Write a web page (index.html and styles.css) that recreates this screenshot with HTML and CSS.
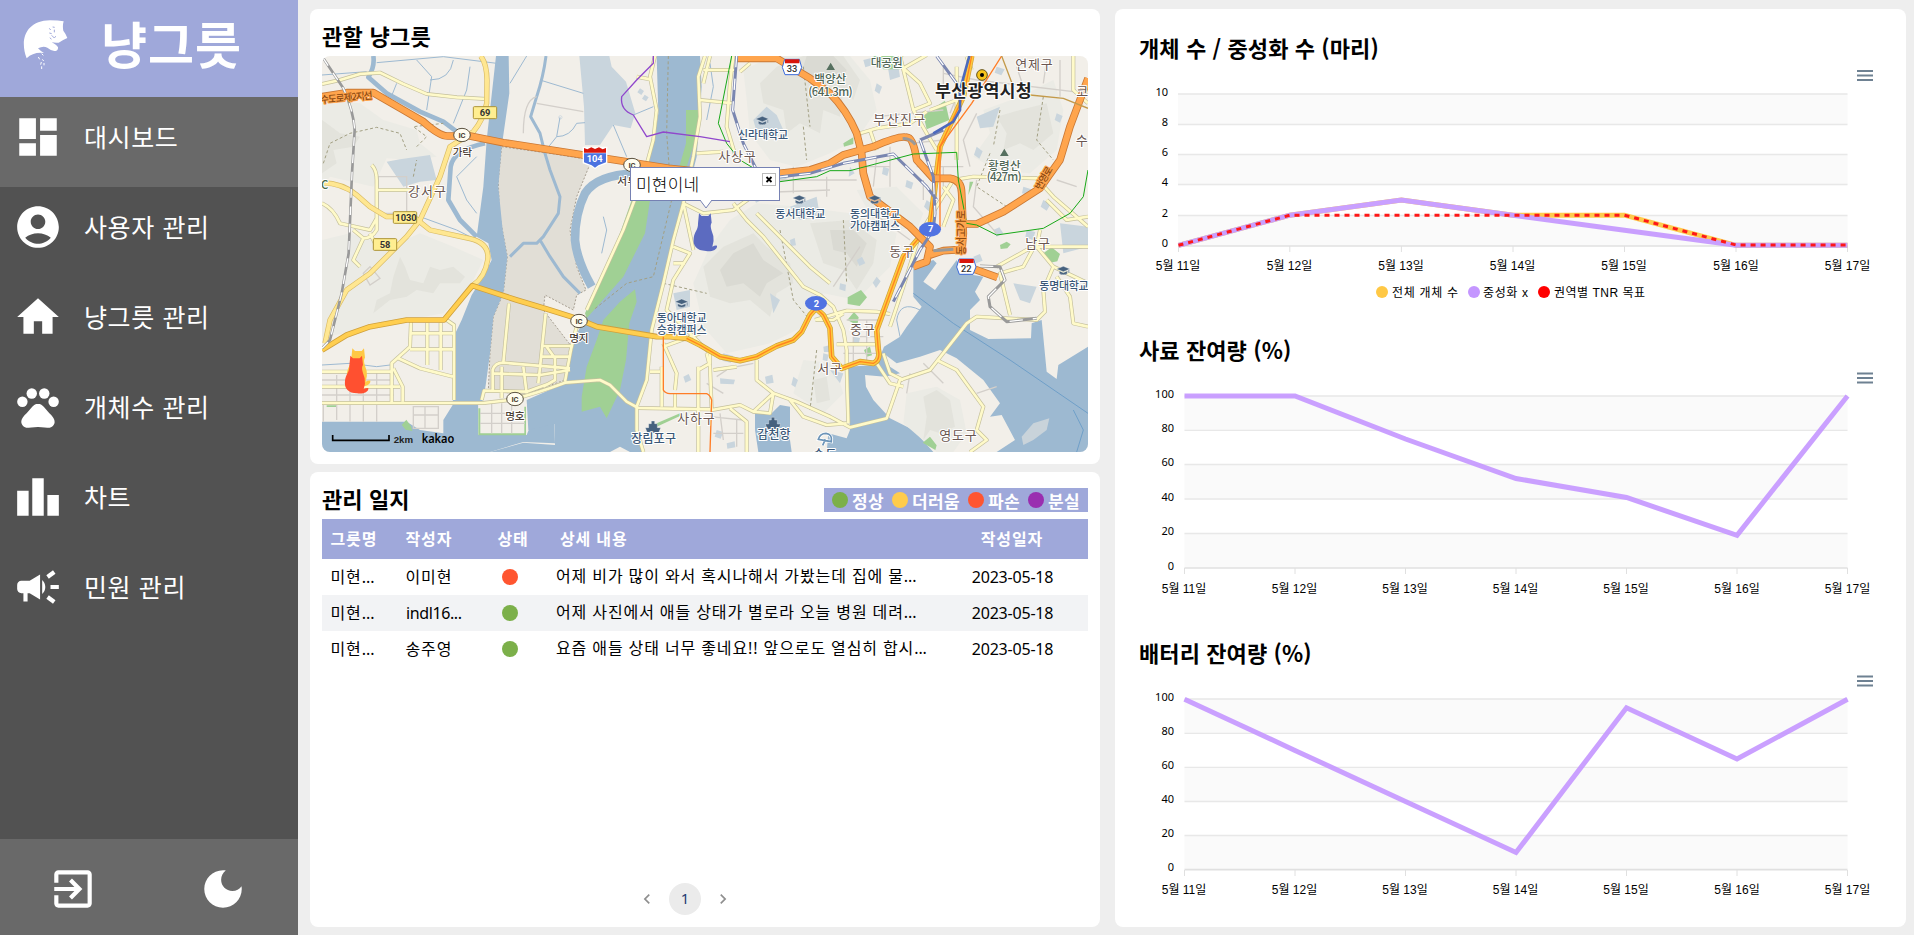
FILE: index.html
```html
<!DOCTYPE html>
<html lang="ko">
<head>
<meta charset="utf-8">
<title>냥그릇</title>
<link rel="stylesheet" href="styles.css">
</head>
<body>
<div class="app">
  <aside class="sidebar">
    <header class="brand">
      <svg class="brand-logo" viewBox="60 50 150 165">
        <path fill="#fff" d="M80 174C58 118 78 61 150 60Q175 60 191 63Q187 76 190 91Q196 98 202 113Q186 120 176 127Q164 128 155 126Q170 133 174 141Q175 152 163 152Q150 149 142 142Q130 135 114 144Q122 153 132 158Q100 154 80 174ZM106 136Q110 131 115 131L107 144Z"/>
        <path fill="none" stroke="#9fa8da" stroke-width="3" d="M148 84l4 5M158 80l6 1M163 88v8M148 98l7 2M155 105l8 8M150 112l4 5M163 112l5-4"/>
        <path fill="none" stroke="#fff" stroke-width="3" d="M125 160l5 5M115 170l4 7M127 177l4 5M132 188v7M124 185l-2 8M125 198v8"/>
      </svg>
      <span class="brand-name">냥그릇</span>
    </header>
    <nav class="menu">
      <a class="item active"><svg viewBox="0 0 24 24"><path d="M3 13h8V3H3v10zm0 8h8v-6H3v6zm10 0h8V11h-8v10zm0-18v6h8V3h-8z"/></svg><span>대시보드</span></a>
      <a class="item"><svg viewBox="0 0 24 24"><path d="M12 2C6.48 2 2 6.48 2 12s4.48 10 10 10 10-4.48 10-10S17.52 2 12 2zm0 4c1.93 0 3.5 1.57 3.5 3.5S13.93 13 12 13s-3.5-1.57-3.5-3.5S10.07 6 12 6zm0 14c-2.03 0-4.43-.82-6.14-2.88C7.55 15.8 9.68 15 12 15s4.45.8 6.14 2.12C16.43 19.18 14.03 20 12 20z"/></svg><span>사용자 관리</span></a>
      <a class="item"><svg viewBox="0 0 24 24"><path d="M10 20v-6h4v6h5v-8h3L12 3 2 12h3v8z"/></svg><span>냥그릇 관리</span></a>
      <a class="item"><svg viewBox="0 0 24 24"><circle cx="4.5" cy="9.5" r="2.5"/><circle cx="9" cy="5.5" r="2.5"/><circle cx="15" cy="5.5" r="2.5"/><circle cx="19.5" cy="9.5" r="2.5"/><path d="M17.34 14.86c-.87-1.02-1.6-1.89-2.48-2.91-.46-.54-1.05-1.08-1.75-1.32-.11-.04-.22-.07-.33-.09-.25-.04-.52-.04-.78-.04s-.53 0-.79.05c-.11.02-.22.05-.33.09-.7.24-1.28.78-1.75 1.32-.87 1.02-1.6 1.89-2.48 2.91-1.31 1.31-2.92 2.76-2.62 4.79.29 1.02 1.02 2.03 2.33 2.32.73.15 3.06-.44 5.54-.44h.18c2.48 0 4.81.58 5.54.44 1.31-.29 2.04-1.31 2.33-2.31.31-2.04-1.3-3.49-2.61-4.8z"/></svg><span>개체수 관리</span></a>
      <a class="item"><svg viewBox="0 0 24 24"><path d="M7.5 21H2V9h5.5v12zm7.25-18h-5.5v18h5.5V3zM22 11h-5.5v10H22V11z"/></svg><span>차트</span></a>
      <a class="item"><svg viewBox="0 0 24 24"><path d="M18 11v2h4v-2h-4zm-2 6.61c.96.71 2.21 1.65 3.2 2.39.4-.53.8-1.07 1.2-1.6-.99-.74-2.24-1.68-3.2-2.4-.4.54-.8 1.08-1.2 1.61zM20.4 5.6c-.4-.53-.8-1.07-1.2-1.6-.99.74-2.24 1.68-3.2 2.4.4.53.8 1.07 1.2 1.6.96-.72 2.21-1.65 3.2-2.4zM4 9c-1.1 0-2 .9-2 2v2c0 1.1.9 2 2 2h1v4h2v-4h1l5 3V6L8 9H4zm11.5 3c0-1.33-.58-2.53-1.5-3.35v6.69c.92-.81 1.5-2.01 1.5-3.34z"/></svg><span>민원 관리</span></a>
    </nav>
    <footer class="side-actions">
      <svg viewBox="0 0 24 24"><path d="M10.09 15.59L11.5 17l5-5-5-5-1.41 1.41L12.67 11H3v2h9.67l-2.58 2.59zM19 3H5c-1.11 0-2 .9-2 2v4h2V5h14v14H5v-4H3v4c0 1.1.89 2 2 2h14c1.1 0 2-.9 2-2V5c0-1.1-.9-2-2-2z"/></svg>
      <svg viewBox="0 0 24 24"><path d="M12 3c-4.97 0-9 4.03-9 9s4.03 9 9 9 9-4.03 9-9c0-.46-.04-.92-.1-1.36-.98 1.37-2.58 2.26-4.4 2.26-2.98 0-5.4-2.42-5.4-5.4 0-1.81.89-3.42 2.26-4.4-.44-.06-.9-.1-1.36-.1z"/></svg>
    </footer>
  </aside>

  <main class="content">
    <div class="left">
      <section class="card map-card">
        <h2 class="title">관할 냥그릇</h2>
        <div class="map">
          <svg class="map-svg" viewBox="36 168 2298 1188">
            <defs>
              <g id="minor">
                <path d="M36 252L90 240L150 222L210 218L280 252L350 282L440 292L530 297"/>
                <path d="M185 495Q200 510 200 540V690Q185 715 160 715L130 690M200 570H320M36 610Q70 625 90 670L180 690L200 655M160 715L130 780L150 800M180 700L200 740"/>
                <path d="M36 1115H245M36 1160H270M245 1208V1090L300 1040L303 965M300 1000H430M300 1048H432M352 968V1095M392 968V1110M265 1075L330 1105L428 1130M432 1200V975L410 960M250 1105L278 1160V1205"/>
                <path d="M36 1209H520L600 1200Q680 1180 765 1148L870 1140L900 1155L950 1205L985 1224L1200 1228"/>
                <path d="M515 1200L522 1172L650 1175L720 1150M548 1175V1110Q555 1088 580 1088L780 1105M580 1088L597 910M685 1150L707 940M545 1120L690 1125L780 1110M640 1100L650 1180M575 1100V1195M700 1038H785L765 1145M695 1070H780M710 1040L735 1075V1140L700 1160M800 980L780 1060"/>
                <path d="M1035 168L1020 230L1040 330L1030 420L1000 530L940 690L830 930M980 230L1020 238"/>
                <path d="M1185 168L1165 230L1170 350L1150 470L1120 610L1090 720L1060 850L1025 990L1010 1140L980 1220V1290L1000 1356M1180 210H1280M1170 300L1270 310M1160 460L1240 455M1120 610L1180 640L1270 630L1340 580M1090 740L1140 760L1090 840L1070 930L1150 1010L1200 1060M1090 790L1125 790M1120 610L1150 750M1165 1100V1356M1020 1115H1050M1055 1100V1220M1095 1180V1225M1165 1110L1200 1090V1050M1060 1040L1170 1000M1060 1030L1100 1120L1095 1170"/>
                <path d="M1200 168L1180 250M1270 168L1260 250L1250 380L1280 480M1290 215L1320 190"/>
                <path d="M1270 610L1310 660L1360 710L1480 860L1530 885L1570 920L1600 990L1610 1050V1100L1615 1270M1515 960Q1580 940 1610 932L1700 935L1740 942M1580 1033H1700M1520 960H1570L1600 940"/>
                <path d="M1190 1060L1200 1100L1205 1230L1290 1215L1330 1235L1390 1180L1460 1205L1560 1250L1620 1282L1730 1255L1770 1140L1860 1110L1970 970L2000 950L2180 960L2205 935L2200 870L2230 800L2334 850M1340 1080V1140L1390 1180L1380 1240L1330 1235M1260 1225L1310 1265V1356M1440 1200L1480 1250L1550 1275L1610 1270M1210 1110L1280 1100"/>
                <path d="M1700 1090L1740 1150L1780 1160M1720 1060L1740 1120L1780 1140M1880 1080L1940 1110L2020 1220L2000 1290L2030 1320L1980 1356"/>
                <path d="M1740 980L1780 860L1830 700L1880 620L1930 540L1990 530L2180 535L2230 590L2334 680M1970 170L1985 210M1770 168Q1790 250 1810 330L1850 400L1880 450M1780 205L1850 165M1780 205L1830 250L1860 310L1810 330M1860 330L1940 300M1940 200V480M1650 400L1700 385L1800 370L1850 335M1680 390L1700 450M1650 400L1640 430M2290 168V270L2334 310M2060 800L2150 750L2190 740H2334M2100 945L2070 820L2140 800L2170 745M2190 690L2180 740L2230 800M1900 560L1930 600L1900 680"/>
                <path d="M2210 600L2270 660L2334 650M2240 830L2280 890L2290 970L2334 980M1560 850L1500 800L1340 640"/>
              </g>
              <g id="yellow">
                <path d="M512 168Q530 190 531 240L530 310Q520 360 490 395L420 440L390 530L330 660L290 710L240 760L180 820L110 870L60 960L45 1030"/>
                <path d="M36 548Q100 550 140 585L180 620L230 650H310L360 690L480 716Q540 730 533 780Q525 830 490 855"/>
              </g>
              <g id="amber"><path d="M36 1050L110 1005L180 980L290 960H402L487 857L620 900L720 930L800 955L860 980L1040 1010H1080L1130 1015"/></g>
              <g id="city">
                <path d="M1130 1015L1170 1035L1230 1070L1290 1082L1340 1070L1400 1038L1450 1020L1475 995L1500 945L1518 925L1540 945L1560 985L1565 1070L1595 1105L1650 1085L1690 1090Q1712 1080 1705 1050L1700 990L1740 880L1780 770L1830 710"/>
                <path d="M1985 168L1960 290L1890 440L1875 560L1860 680"/>
              </g>
              <g id="orange">
                <path d="M36 290L110 278L190 278L280 330L340 365Q390 410 415 408H480L580 428L820 465L960 487L1075 505L1200 518L1410 520L1500 510L1560 490L1600 465L1690 440Q1770 405 1790 412Q1810 410 1820 480L1870 535H1920Q1955 540 1955 580L1960 700L1955 760"/>
                <path d="M1280 175H1400L1500 235L1560 280Q1610 330 1640 400L1655 460L1660 520L1680 590L1720 620L1800 680L1860 740L1850 785L1810 800"/>
                <path d="M1960 672H2000L2080 635L2190 565L2250 480L2280 380L2310 300L2334 235M1995 808L2062 832M1860 765L1900 752L1960 748"/>
              </g>
              <path id="cat" d="M17 0L25 8H45L52 0L55 28C48 38 56 52 60 68Q63 85 57 100Q64 96 71 97C73 110 52 116 38 113C10 112-2 98 1 75C3 55 15 50 14 30Z"/>
              <g id="school"><path d="M0 12L20 4L40 12L20 20Z"/><path d="M8 18V26Q20 33 32 26V18L20 23ZM35 14h3v10h-3z"/></g>
            </defs>

            <rect x="36" y="168" width="2298" height="1188" fill="#f2efe9"/>

            <g class="hill">
              <path d="M36 300L150 310L220 360L320 390L330 430L380 470L300 480L230 475L190 560L60 530L36 560Z"/>
              <path d="M36 720L120 700L240 740L330 700L430 740L520 780L480 860L400 940L290 960L180 970L110 1000L36 1010Z"/>
              <path d="M1300 210L1390 168L1620 168L1680 240L1700 330L1640 420L1560 460L1460 500L1380 480L1320 400L1310 300Z"/>
              <path d="M1260 660L1340 610L1470 620L1620 640L1760 700L1740 800L1640 900L1540 880L1480 980L1380 1030L1250 1060L1180 980L1150 850L1200 740Z"/>
              <path d="M2020 330L2130 290L2230 240L2260 330L2240 450L2160 520L2060 510L1990 470L2040 400Z"/>
              <path d="M1480 1080L1570 1090L1600 1180L1540 1240L1450 1180Z"/>
              <path d="M1640 570L1760 560L1840 640L1820 690L1700 680Z"/>
            </g>
            <g class="hill-dark">
              <path d="M50 370L90 400L150 410L130 440L70 450L80 490L36 520V360Z"/>
              <path d="M270 770L285 800L300 840L340 850L360 800L390 810L430 800L465 830L450 850L390 850L370 880L320 870L290 890L240 900L190 940L200 900L240 880L250 830Z"/>
              <path d="M1350 250L1400 200L1480 168H1600L1650 240L1630 300L1600 270L1590 350L1540 330L1530 400L1470 370L1430 400L1420 330L1360 310Z"/>
              <path d="M1240 740L1330 700L1370 740L1440 790L1450 850L1400 880L1380 950L1320 900L1260 910L1200 890L1180 800Z"/>
              <path d="M1500 670L1620 660L1700 720L1690 790L1640 870L1600 810L1540 790Z"/>
              <path d="M2060 350L2130 330L2210 310L2230 400L2170 450L2130 430L2080 450L2090 400Z"/>
              <path d="M1510 1140L1550 1130L1560 1200L1520 1210Z"/>
            </g>
            <g class="hill-core">
              <path d="M1490 168H1570L1610 210L1590 250L1560 230L1530 290L1500 250L1470 230Z"/>
              <path d="M1270 760L1330 730L1360 780L1420 820L1370 850L1350 890L1300 850L1250 860L1230 810Z"/>
              <path d="M1560 690L1630 690L1670 730L1640 800L1610 760L1570 750Z"/>
            </g>
            <g class="town">
              <path d="M230 485L270 478L360 465L380 540L330 545L280 560L260 530Z"/>
              <path d="M808 168H898L905 200L948 245L976 340L962 385L910 375L870 435H825L822 320Z"/>
              <path d="M1330 360L1370 320L1400 345L1420 390L1370 415L1340 395Z"/>
              <path d="M2000 350L2070 320L2050 380L2010 385ZM2110 850L2180 860L2160 910L2130 900ZM1440 620L1520 590L1530 650L1470 660ZM1090 880L1140 870L1140 920L1100 930ZM2250 670L2334 680V740L2260 760ZM1730 180L1760 168L1770 230L1740 240ZM1400 500L1440 530L1410 545ZM1560 1110L1600 1120L1590 1150ZM1380 880L1410 900L1390 940Z"/>
              <path d="M990 265l12 8-8 12-12-8zM1004 284l12 8-8 12-12-8z"/>
              <path d="M1230 1135l45 4-4 14-40-2zM1240 1060l30 8-8 20-25-6zM1365 1130l22-6 4 24-22 4zM1450 1130l14 10-8 22-12-8zM1540 1040l18-4v20h-16zM1630 1010l20 4-4 18-18-4zM1640 780l16-10 10 20-18 8zM1700 830l12 14-14 20-10-16zM1620 500l14 20-18 10zM1720 500l18 6-6 22-16-6zM1850 600l16 12-10 22-14-14zM1790 540l20 8-6 20-18-8zM2000 440l18 14-10 22-16-12zM2140 560l24 8-6 18-22-6zM2200 600l22 12-12 20-18-12zM2260 420l16 12-10 24-14-12zM2050 690l18-8 12 18-20 10zM1990 770l20-8 8 20-20 8zM2150 690l26 6-8 24-22-8zM1700 250l16 10-8 22-14-10zM1660 180l24-6 6 20-24 8zM1220 1290l20 6-8 20-18-6zM1250 1330l24-6 2 18-24 4zM1120 1130l16-8 8 18-18 8zM620 1250h26v24h-26zM540 1240h16v14h-16zM1540 1060l16 4-4 20-14-4zM1440 720l14-6 4 22-16 2zM1330 590l16-6 10 16-18 8zM1590 850l18 4-2 20-18-6zM2060 200l24 8-10 18-20-8zM2240 340l18 8-8 20-16-8z"/>
            </g>
            <path class="tan" d="M575 440L720 460L845 480L800 590L780 690L800 800L828 870L800 885L790 930L705 885L700 930L785 1040L765 1140L640 1185L535 1170L540 1060L550 950L580 880L592 770L568 640L565 540Z"/>

            <g class="water">
              <path d="M558 168H596L598 280L575 440L565 560L578 690L592 770L580 880L550 950L540 1060L528 1150L520 1200L505 1215V1305H650L660 1280L732 1270L735 1330L640 1326L540 1356H36V1265H290L330 1290L400 1300V1260L428 1215L436 1000L455 960L485 885L520 830L545 780L535 730L500 710L520 560L530 420Z"/>
              <path d="M1040 168L1045 340L1030 430L1000 550L945 690L880 830L825 960L800 1000L785 1060L765 1150L650 1200L655 1290L733 1272L735 1335L640 1328L540 1356H1000L980 1290L982 1220L1010 1140L1020 1000L1060 850L1090 720L1125 610L1160 470L1175 260L1170 168Z"/>
              <path d="M1810 800L1870 780L1880 790L1840 845L1875 870L1940 780L1960 820L2020 830L1995 875L2010 900L1980 930V990L2035 1017L2163 1015L2165 970L2195 960L2210 1115L2240 1137L2245 1095L2334 1040V1356H1550L1555 1300L1610 1315L1620 1290L1612 1100L1700 1095L1722 1040L1770 1010L1790 980L1835 920L1810 890Z"/>
              <path d="M1335 1235L1385 1240L1410 1215L1440 1220V1320L1445 1356H1345L1335 1290Z"/>
            </g>
            <path fill="#f2efe9" d="M505 1215L650 1212V1303H505Z"/>
            <path fill="#f2efe9" d="M1665 1125L1725 1130L1770 1120L1740 1100L1720 1060L1760 1090L1830 1070L1890 1050L1940 1075L2020 1140L2070 1210L2040 1250L2075 1245L2115 1320L2060 1356H1870L1810 1290L1740 1255L1690 1200L1668 1160Z"/>
            <path fill="#f2efe9" d="M900 1356L930 1340L960 1356Z"/>
            <path fill="#c9d3da" d="M2135 1310L2170 1270L2218 1255L2210 1290L2170 1320L2140 1335Z"/>
            <g class="hill">
              <path d="M1790 1180L1880 1160L1950 1200L1970 1300L1930 1356H1880L1780 1270Z"/>
            </g>
            <path class="hill-dark" d="M1840 1190L1880 1170L1920 1200L1935 1280L1890 1300L1860 1290L1840 1320L1850 1250Z"/>
            <g class="stream">
              <path stroke-width="14" d="M190 168Q195 200 175 232L230 280L330 335L400 365L440 395M525 430Q430 450 422 500L415 600L450 660L500 710"/>
              <path stroke-width="9" d="M708 168Q700 230 680 290L662 350L690 400L705 460L720 510L750 590L745 640L700 710L680 730L640 730L600 770M690 720L720 770L760 830L810 880"/>
              <path stroke-width="26" d="M975 520Q860 525 825 580Q795 640 795 720Q800 780 845 860"/>
              <path stroke-width="3" d="M36 225L170 215M200 188L400 170L560 190M320 180L365 230L350 330M430 180Q420 240 360 240M480 200L470 270L430 370M260 250L240 300M690 240L820 280M750 352L740 410L700 460M740 410Q780 410 800 370L825 368M600 250L650 168M910 375L950 470M970 345L1030 320M880 650L890 690L875 760M500 470L440 530L470 600L500 640M36 1095L120 1090L200 1100L240 1095M330 650L440 690L480 710M1200 190L1210 260L1190 360M1830 930Q1770 900 1760 960L1770 1010"/>
              <circle cx="751" cy="352" r="5"/>
            </g>
            <path fill="none" stroke="#6f9fc8" stroke-width="3" d="M1810 880L1930 970L2100 1080L2334 1240M2290 1230L2320 1290L2300 1356"/>
            <g class="green">
              <path d="M1128 330H1168L1162 400L1130 500H1108L1128 430Z"/>
              <path d="M965 600H1020L1005 700L940 830L830 955L825 940L885 810L930 700Z"/>
              <path d="M975 868L980 905L958 970L948 1080L930 1170L890 1255L870 1220L815 1235L815 1190L830 1100L860 1020L880 960L930 905Z"/>
              <path d="M1840 345L1905 302L1918 360L1850 388ZM1613 892l40-22 18 22-22 26-36-6zM1612 960l20-24 14 16-4 24zM1662 1050l18-10 6 26-16 4zM1990 545l-15 40 4-40zM1600 430l30-18v20l-28 8zM2200 760l25-18 25 20-8 22-25 5zM2070 735l20-10 12 8-10 12-20 2zM275 1275l14-16 14 20 4 14-20-4zM505 1225h6v75h132v-80h5v86h-143zM1838 1328l22-18 20 26-4 14zM1690 168h90l-10 40h-50zM1040 1270l70-30v8l-70 32zM50 1216h30v5H50z"/>
            </g>
            <g class="blocks">
              <path d="M205 530H290V640H205ZM40 1210V1265M80 1125V1260M120 1120V1265M160 1120V1265M200 1120V1265M36 1140H250M36 1185H250M310 1220H385V1285H310ZM345 1220V1285M310 1245H385M545 1210V1300M575 1210V1300M605 1210V1300M510 1240H645M510 1270H645M160 820l20-20 30 35-30 20z"/>
              <path d="M1260 540L1640 540M1290 580L1560 570M1350 530V600M1450 500V580M1550 530V590M1820 500H1960M1840 540V600M1900 500V560M1800 430L1900 420M1690 640L1800 720M2000 540L1990 620L2060 700M1650 740L1570 860M1700 350L1900 330M1900 220L2000 240L2334 280M1610 960H1720M1650 1010H1720M1600 1060H1710M1190 1150L1240 1180M1220 1130L1250 1110M1840 1090L1900 1150M680 290Q640 300 640 400M680 310L820 335"/>
              <path d="M1700 470L1690 560M1740 440V560M1660 500H1740M1960 240L1920 340M2000 340L1960 420L1980 500M1900 200V280M2120 200L2150 290M2250 180V290M2210 180L2200 250M2240 540L2300 560M1290 500V600M1630 1010V1100M1670 960V1090M1230 1240L1240 1320M1280 1260V1340M1210 1300H1300M1200 1250L1300 1260M1800 1120L1790 1180M2060 1160L2000 1180M1230 1110L1330 1090"/>
            </g>
            <g class="dashed">
              <path d="M40 490L60 430L120 400L200 382L270 400L290 450M310 530L320 480M320 440L350 410L310 380L400 370M1075 168L1070 400L1085 600L1030 830L950 850L850 930M1480 380L1490 480M1480 200L1500 380M1410 690L1450 900L1500 960M1600 660L1610 850M1520 1050L1500 1230M2200 290L2180 420L2230 480M2040 460L2000 560L2090 620M1060 850L1190 880M2070 330L2050 440"/>
            </g>

            <use href="#minor" class="minor-c"/><use href="#minor" class="minor-f"/>
            <use href="#yellow" class="yellow-c"/><use href="#yellow" class="yellow-f"/>
            <use href="#amber" class="amber-c"/><use href="#amber" class="amber-f"/>
            <use href="#city" class="amber-c"/><use href="#city" class="city-f"/><use href="#city" class="city-m"/>
            <use href="#orange" class="orange-c"/><use href="#orange" class="orange-f"/>
            <g class="rail">
              <path stroke="#999" stroke-width="8" d="M40 175L100 265Q130 330 134 390L126 520L116 760L95 880L60 1020L36 1045"/>
              <path stroke="#fff" stroke-width="4" stroke-dasharray="26 26" d="M40 175L100 265Q130 330 134 390L126 520L116 760L95 880L60 1020L36 1045"/>
              <path stroke="#7a86b0" stroke-width="9" d="M1280 168L1268 330L1300 430L1340 510M1400 532L1500 520L1600 490L1750 462L1850 560L1880 600M1880 168L1940 250M1830 420L1870 530L1875 640L1870 690L1830 750L1750 905M1900 390L1830 420"/>
              <path stroke="#fff" stroke-width="4" stroke-dasharray="34 34" d="M1280 168L1268 330L1300 430L1340 510M1400 532L1500 520L1600 490L1750 462L1850 560L1880 600M1880 168L1940 250M1830 420L1870 530L1875 640L1870 690L1830 750L1750 905"/>
              <path stroke="#4c69bd" stroke-width="8" d="M1978 168L1950 270V330L1930 365L1870 400"/>
              <path stroke="#18a818" stroke-width="3" d="M1265 168L1225 370L1250 430L1290 480L1340 510M1410 545L1520 530L1560 512H1620L1810 462L1940 457L1945 540L1970 670L2000 675L2060 705L2200 685L2280 640L2320 590L2334 510"/>
              <path stroke="#9047cc" stroke-width="4" d="M1030 168V190L980 240L935 290Q930 330 970 345L1010 410L1060 396L1170 410L1260 425"/>
              <path stroke="#ff7d26" stroke-width="4" d="M2075 168L1985 310L1890 440V690M1060 1010V1170Q1065 1180 1080 1181H1190Q1200 1185 1205 1200L1200 1356"/>
              <path stroke="#c39a4a" stroke-width="4" d="M2075 168L2110 260M2160 285L2260 295L2334 325"/>
              <path stroke="#999" stroke-width="9" d="M2010 798L2070 800L2085 840L2035 890L2040 920L2090 965L2180 955M1778 416Q1800 414 1816 434M1870 752L1930 748"/>
              <path stroke="#fff" stroke-width="4" stroke-dasharray="40 30" d="M2010 798L2070 800L2085 840L2035 890L2040 920L2090 965L2180 955"/>
            </g>

            <g class="ic">
              <g transform="translate(456 405)"><ellipse rx="25" ry="20"/><text y="8">IC</text></g>
              <g transform="translate(966 495)"><ellipse rx="25" ry="20"/><text y="8">IC</text></g>
              <g transform="translate(807 963)"><ellipse rx="25" ry="20"/><text y="8">IC</text></g>
              <g transform="translate(615 1197)"><ellipse rx="25" ry="20"/><text y="8">IC</text></g>
            </g>
            <g class="sign">
              <rect x="490" y="320" width="70" height="36" rx="3"/><text x="525" y="348">69</text>
              <rect x="250" y="635" width="70" height="35" rx="3"/><text x="288" y="662">1030</text>
              <rect x="190" y="716" width="70" height="35" rx="3"/><text x="225" y="743">58</text>
            </g>
            <g class="shield">
              <path fill="#fff" d="M818 440h74v50l-28 10-9 8-9-8-28-10z"/><path fill="#4b72e0" d="M822 460H888V487L865 496L855 503L845 496L822 487Z"/><path fill="#d8160c" d="M822 444l10 4 12-6 11 5 12-5 11 6 10-4V458H822Z"/><text x="854" y="486">104</text>
              <ellipse cx="1860" cy="688" rx="33" ry="22" fill="#5173e2"/><text x="1862" y="697">7</text>
              <ellipse cx="1518" cy="910" rx="33" ry="22" fill="#5173e2"/><text x="1519" y="920">2</text>
              <g id="hex"><path fill="#fff" stroke="#3c6ad8" stroke-width="3" d="M1424 178H1468L1475 202L1466 224H1425L1417 202Z"/><path fill="#d8160c" d="M1425 178h43v12h-43z"/></g>
              <use href="#hex" x="523" y="599"/>
              <g><text x="1446" y="215">33</text><text x="1969" y="816">22</text></g>
            </g>
            <circle cx="2016" cy="225" r="16" fill="#f7c51c" stroke="#665110" stroke-width="3"/><circle cx="2016" cy="225" r="6"/>
            <g fill="#56705f"><path d="M1562 188l13 22h-26zM2083 446l13 22h-26z"/></g>
            <g fill="#46617e" stroke="#fff" stroke-width="1">
              <use href="#school" x="1337" y="345"/><use href="#school" x="1448" y="582"/><use href="#school" x="1674" y="582"/><use href="#school" x="1095" y="893"/><use href="#school" x="2240" y="795"/>
              <path d="M1024 1263h10v8h8v12h10l-6 16h-34l-6-16h10v-12h8zM1384 1252h10v8h8v12h10l-6 16h-34l-6-16h10v-12h8z"/>
            </g>
            <path fill="none" stroke="#fff" stroke-width="10" d="M1525 1318Q1530 1300 1548 1300Q1568 1303 1564 1325ZM1546 1318L1538 1336"/>
            <path fill="none" stroke="#6c94b8" stroke-width="5" d="M1525 1318Q1530 1300 1548 1300Q1568 1303 1564 1325ZM1546 1318L1538 1336"/>

            <g class="label">
              <text x="30" y="303" textLength="158" transform="rotate(-5 110 290)" class="on-road">수도로제2지선</text>
              <text x="428" y="467" textLength="58" font-size="32">가락</text>
              <text x="922" y="556" textLength="60" font-size="32">서부</text>
              <text x="294" y="588" textLength="114" class="gu">강서구</text>
              <text x="33" y="568" class="rest">C</text>
              <text x="778" y="1025" textLength="58" font-size="32">명지</text>
              <text x="586" y="1259" textLength="58" font-size="32">명호</text>
              <text x="1225" y="484" textLength="112" class="gu">사상구</text>
              <text x="1690" y="371" textLength="156" class="gu">부산진구</text>
              <text x="2116" y="208" textLength="112" class="gu">연제구</text>
              <text x="1738" y="769" textLength="74" class="gu">동구</text>
              <text x="1620" y="1001" textLength="74" class="gu">중구</text>
              <text x="1522" y="1120" textLength="74" class="gu">서구</text>
              <text x="2146" y="744" textLength="74" class="gu">남구</text>
              <text x="1888" y="1319" textLength="112" class="gu">영도구</text>
              <text x="1102" y="1268" textLength="112" class="gu">사하구</text>
              <text x="2299" y="287" class="gu">코</text><text x="2297" y="434" class="gu">수</text>
              <g class="edu">
                <text x="1284" y="418" textLength="150">신라대학교</text>
                <text x="1396" y="655" textLength="150">동서대학교</text>
                <text x="1620" y="655" textLength="150">동의대학교</text>
                <text x="1620" y="691" textLength="150">가야캠퍼스</text>
                <text x="1040" y="967" textLength="150">동아대학교</text>
                <text x="1040" y="1003" textLength="150">승학캠퍼스</text>
                <text x="2188" y="869" textLength="148">동명대학교</text>
                <text x="964" y="1330" textLength="134" class="port">장림포구</text>
                <text x="1342" y="1318" textLength="100" class="port">감천항</text>
                <text x="1510" y="1376" textLength="70" class="port">송도</text>
              </g>
              <g class="peak">
                <text x="1513" y="250" textLength="96">백양산</text><text x="1495" y="287" textLength="133">(641.3m)</text>
                <text x="2034" y="509" textLength="98">황령산</text><text x="2030" y="544" textLength="105">(427m)</text>
                <text x="1682" y="200" textLength="96">대공원</text>
              </g>
              <text x="1875" y="291" textLength="290" class="hall">부산광역시청</text>
              <text transform="translate(2192 572) rotate(-60)" textLength="75" class="on-road">번영로</text>
              <text transform="translate(1964 765) rotate(-90)" textLength="135" class="on-road">동서고가로</text>
            </g>
            <use href="#cat" fill="#ffc845" transform="translate(110 1045)"/>
            <use href="#cat" fill="#ff5030" transform="translate(104 1067)"/>
            <use href="#cat" fill="#5c6bc0" transform="translate(1150 640)"/>
            <path fill="none" stroke="#000" stroke-width="5" d="M68 1305V1321H237V1305"/>
            <text class="scale" x="251" y="1330">2km</text>
            <text class="kakao" x="335" y="1329" textLength="98" lengthAdjust="spacingAndGlyphs">kakao</text>
          </svg>
          <div class="popup"><span>미현이네</span><i class="popup-close"><svg viewBox="0 0 12 11"><path d="M3.5 3l5 5M8.5 3l-5 5"/></svg></i><svg class="popup-tip" viewBox="0 0 12 9"><path d="M0 0L6 8L12 0" /></svg></div>
        </div>
      </section>

      <section class="card log-card">
        <div class="log-head">
          <h2 class="title">관리 일지</h2>
          <div class="status-legend">
            <span><i class="dot ok"></i>정상</span><span><i class="dot dirty"></i>더러움</span><span><i class="dot broken"></i>파손</span><span><i class="dot lost"></i>분실</span>
          </div>
        </div>
        <div class="table">
          <div class="row head"><span>그릇명</span><span>작성자</span><span class="center state">상태</span><span class="detail">상세 내용</span><span class="center">작성일자</span></div>
          <div class="row"><span>미현<b class="dots">...</b></span><span>이미현</span><span class="center"><i class="dot broken"></i></span><span class="detail">어제 비가 많이 와서 혹시나해서 가봤는데 집에 물<b class="dots">...</b></span><span class="center date">2023-05-18</span></div>
          <div class="row alt"><span>미현<b class="dots">...</b></span><span class="latin">indl16...</span><span class="center"><i class="dot ok"></i></span><span class="detail">어제 사진에서 애들 상태가 별로라 오늘 병원 데려<b class="dots">...</b></span><span class="center date">2023-05-18</span></div>
          <div class="row"><span>미현<b class="dots">...</b></span><span>송주영</span><span class="center"><i class="dot ok"></i></span><span class="detail">요즘 애들 상태 너무 좋네요!! 앞으로도 열심히 합시<b class="dots">...</b></span><span class="center date">2023-05-18</span></div>
        </div>
        <div class="pager">
          <svg viewBox="0 0 24 24"><path d="M15.41 7.41L14 6l-6 6 6 6 1.41-1.41L10.83 12z"/></svg>
          <span class="page">1</span>
          <svg viewBox="0 0 24 24"><path d="M10 6L8.59 7.41 13.17 12l-4.58 4.59L10 18l6-6z"/></svg>
        </div>
      </section>
    </div>

    <section class="card charts">
      <div class="chart">
        <h2 class="title">개체 수 / 중성화 수 (마리)</h2>
        <svg class="plot" viewBox="1139 0 743 270">
          <g class="menu-ic"><path d="M1857 6h16M1857 10.5h16M1857 15h16"/></g>
          <path class="band" d="M1178 29H1847.5V59.4H1178ZM1178 89.8H1847.5V120.2H1178ZM1178 150.6H1847.5V181H1178Z"/>
          <path class="grid" d="M1178 29H1847.5M1178 59.5H1847.5M1178 89.5H1847.5M1178 119.5H1847.5M1178 150.5H1847.5"/>
          <path class="axis" d="M1178 181H1847.5"/>
          <path class="tick" d="M1178.5 181v6M1289.8 181v6M1401.4 181v6M1513 181v6M1624.5 181v6M1736 181v6M1847.5 181v6"/>
          <g class="series">
            <path stroke="#ffc73c" d="M1178.5 180.3L1289.8 150.2L1401.4 135L1513 150.2H1624.5L1736 180.3H1847.5"/>
            <path stroke="#c496ff" d="M1178.5 180.3L1289.8 150.2L1401.4 135L1513 150.2L1624.5 165.2L1736 180.3H1847.5"/>
            <path stroke="#ff0000" stroke-width="3" stroke-dasharray="5" d="M1178.5 180.3L1289.8 150.2H1624.5L1736 180H1847.5"/>
          </g>
          <g class="y"><text x="1168" y="31">10</text><text x="1168" y="61">8</text><text x="1168" y="91">6</text><text x="1168" y="121">4</text><text x="1168" y="152">2</text><text x="1168" y="182">0</text></g>
          <g class="x"><text x="1178" y="205">5월 11일</text><text x="1289.5" y="205">5월 12일</text><text x="1401" y="205">5월 13일</text><text x="1512.5" y="205">5월 14일</text><text x="1624" y="205">5월 15일</text><text x="1736" y="205">5월 16일</text><text x="1847.5" y="205">5월 17일</text></g>
          <g class="key"><circle cx="1382" cy="227" r="6" fill="#ffc845"/><text x="1392" y="232" textLength="66">전체 개체 수</text><circle cx="1474" cy="227" r="6" fill="#c496ff"/><text x="1483" y="232" textLength="45">중성화 x</text><circle cx="1544" cy="227" r="6" fill="#f00"/><text x="1554" y="232" textLength="91">권역별 TNR 목표</text></g>
        </svg>
      </div>
      <div class="chart">
        <h2 class="title">사료 잔여량 (%)</h2>
        <svg class="plot" viewBox="1139 0 743 270">
          <g class="menu-ic"><path d="M1857 6.5h16M1857 11h16M1857 15.5h16"/></g>
          <path class="band" d="M1184.5 29H1847.5V63.2H1184.5ZM1184.5 97.4H1847.5V131.4H1184.5ZM1184.5 166H1847.5V201H1184.5Z"/>
          <path class="grid" d="M1184.5 29H1847.5M1184.5 63.3H1847.5M1184.5 97.5H1847.5M1184.5 132H1847.5M1184.5 166.5H1847.5"/>
          <path class="axis" d="M1184.5 201H1847.5"/>
          <path class="tick" d="M1184.5 201v6M1295 201v6M1405.5 201v6M1516 201v6M1626.5 201v6M1737 201v6M1847.5 201v6"/>
          <g class="series"><path stroke="#c496ff" d="M1184.5 29H1295L1405.5 72L1516 111.5L1626.5 130.5L1737 168.3L1847.5 29"/></g>
          <g class="y"><text x="1174" y="31">100</text><text x="1174" y="65">80</text><text x="1174" y="99">60</text><text x="1174" y="134">40</text><text x="1174" y="168">20</text><text x="1174" y="203">0</text></g>
          <g class="x"><text x="1184" y="226">5월 11일</text><text x="1294.5" y="226">5월 12일</text><text x="1405" y="226">5월 13일</text><text x="1515.5" y="226">5월 14일</text><text x="1626" y="226">5월 15일</text><text x="1737" y="226">5월 16일</text><text x="1847.5" y="226">5월 17일</text></g>
        </svg>
      </div>
      <div class="chart">
        <h2 class="title">배터리 잔여량 (%)</h2>
        <svg class="plot" viewBox="1139 0 743 270">
          <g class="menu-ic"><path d="M1857 6.5h16M1857 11h16M1857 15.5h16"/></g>
          <path class="band" d="M1184.5 29H1847.5V63.2H1184.5ZM1184.5 97.4H1847.5V131.4H1184.5ZM1184.5 165.4H1847.5V199.5H1184.5Z"/>
          <path class="grid" d="M1184.5 29H1847.5M1184.5 63.3H1847.5M1184.5 97.3H1847.5M1184.5 131.5H1847.5M1184.5 165.5H1847.5"/>
          <path class="axis" d="M1184.5 199.6H1847.5"/>
          <path class="tick" d="M1184.5 200v6M1295 200v6M1405.5 200v6M1516 200v6M1626.5 200v6M1737 200v6M1847.5 200v6"/>
          <g class="series"><path stroke="#c496ff" d="M1184.5 29.3L1295 80.4L1405.5 131.5L1516 182.5L1626.5 37.8L1737 89L1847.5 29.3"/></g>
          <g class="y"><text x="1174" y="31">100</text><text x="1174" y="65">80</text><text x="1174" y="99">60</text><text x="1174" y="133">40</text><text x="1174" y="167">20</text><text x="1174" y="201">0</text></g>
          <g class="x"><text x="1184" y="224">5월 11일</text><text x="1294.5" y="224">5월 12일</text><text x="1405" y="224">5월 13일</text><text x="1515.5" y="224">5월 14일</text><text x="1626" y="224">5월 15일</text><text x="1737" y="224">5월 16일</text><text x="1847.5" y="224">5월 17일</text></g>
        </svg>
      </div>
    </section>
  </main>
</div>
</body>
</html>
```

FILE: styles.css
```css
* { box-sizing: border-box; }
body {
  margin: 0;
  height: 935px;
  overflow: hidden;
  background: #eee;
  color: #000;
  font-family: "Noto Sans", "Noto Sans CJK KR", sans-serif;
}
.app { display: flex; width: 100%; height: 935px; }

/* sidebar */
.sidebar {
  display: flex;
  flex-direction: column;
  width: 298px;
  flex: none;
  background: #525252;
  color: #fff;
  font-family: "Noto Sans CJK KR", sans-serif;
}
.brand { display: flex; height: 97px; padding-left: 20px; background: #9fa8da; }
.brand-logo { width: 50px; height: 55px; margin-top: 17px; }
.brand-name {
  margin-left: 31px;
  font-size: 50px;
  font-weight: 700;
  line-height: 84px;
  letter-spacing: 1px;
}
.menu { flex: 1; }
.item { display: flex; align-items: flex-start; height: 90px; padding: 15px 0 0 13px; }
.item.active { background: #696969; }
.item svg, .side-actions svg { width: 50px; height: 50px; fill: #fff; }
.item span {
  margin-left: 21px;
  font-size: 25px;
  line-height: 49px;
  letter-spacing: .6px;
  font-weight: 400;
}
.side-actions {
  display: flex;
  height: 96px;
  padding: 25px 50px 0 48px;
  justify-content: space-between;
  background: #696969;
}

/* cards */
.content { display: flex; gap: 15px; padding: 9px 8px 8px 12px; flex: 1; }
.left { display: flex; flex-direction: column; gap: 8px; width: 790px; }
.card { background: #fff; border-radius: 8px; }
.title {
  margin: 0;
  font-family: "Noto Sans CJK KR", sans-serif;
  font-size: 22px;
  font-weight: 700;
  line-height: 30px;
  letter-spacing: .1px;
}
.map-card { height: 455px; padding: 10px 12px 0; }
.map-card .title { height: 37px; line-height: 32px; letter-spacing: .3px; }
.map { position: relative; height: 396px; }
.map-svg { display: block; width: 766px; height: 396px; border-radius: 8px; }

/* map layers */
.hill { fill: #ebebe5; }
.hill-dark { fill: #e3e3dc; }
.hill-core { fill: #dadad3; }
.town { fill: #c9d5dd; }
.tan { fill: #e1ded6; stroke: #a79f92; stroke-width: 3; stroke-dasharray: 6 5; }
.water { fill: #9db9d1; }
.green { fill: #a0d094; }
.stream { fill: none; stroke: #9db9d1; stroke-linejoin: round; }
.blocks { fill: none; stroke: #d3cfca; stroke-width: 4; }
.dashed { fill: none; stroke: #a29f83; stroke-width: 3; stroke-dasharray: 9 7; }
.minor-c, .minor-f, .yellow-c, .yellow-f, .amber-c, .amber-f, .city-f, .city-m, .orange-c, .orange-f, .rail {
  fill: none;
  stroke-linejoin: round;
}
.minor-c { stroke: #c5c09d; stroke-width: 12; }
.minor-f { stroke: #fffac9; stroke-width: 8; }
.yellow-c { stroke: #d9bb66; stroke-width: 16; }
.yellow-f { stroke: #ffe791; stroke-width: 12; }
.amber-c { stroke: #cfa03c; stroke-width: 17; }
.amber-f { stroke: #ffce4f; stroke-width: 12; }
.city-f { stroke: #ffc93c; stroke-width: 13; }
.city-m { stroke: #ff8420; stroke-width: 4; }
.orange-c { stroke: #c97835; stroke-width: 23; }
.orange-f { stroke: #ffa54d; stroke-width: 18; }
.ic ellipse { fill: #fffdf0; stroke: #5b5240; stroke-width: 3; }
.ic text, .sign text, .shield text {
  font-family: Roboto, sans-serif;
  font-weight: 700;
  text-anchor: middle;
  fill: #4a4030;
  font-size: 23px;
}
.sign rect { fill: #ffee91; stroke: #ad9335; stroke-width: 3; }
.sign text { font-size: 28px; fill: #333; }
.shield text { font-size: 28px; fill: #fff; }
.shield g text { fill: #333; font-weight: 500; }
.label text {
  font-family: "Noto Sans CJK KR", sans-serif;
  font-weight: 500;
  paint-order: stroke;
  stroke-linejoin: round;
}
.label { fill: #4d4137; stroke: #fff; stroke-width: 6; }
.label .gu { font-size: 39px; fill: #6a5650; font-weight: 400; }
.label .hall { font-size: 52px; fill: #222; font-weight: 700; }
.label .edu { fill: #3b5878; font-size: 33px; }
.label .port { font-size: 36px; }
.label .peak { fill: #4f6656; font-size: 35px; }
.label .rest { fill: #476b49; font-size: 34px; }
.label .on-road { fill: #8c4a12; stroke: #ffa54d; font-size: 30px; }
.scale { font: 700 29px "Liberation Sans", sans-serif; fill: #222; }
.kakao { font: 600 36px "Noto Sans", sans-serif; }

.popup {
  position: absolute;
  left: 308px;
  top: 111px;
  width: 150px;
  height: 34px;
  padding-left: 5px;
  background: #fff;
  border: 1px solid #7681b3;
  font: 300 17px/32px "Noto Sans CJK KR", sans-serif;
  letter-spacing: .2px;
}
.popup-close {
  position: absolute;
  right: 3px;
  top: 5px;
  width: 14px;
  height: 13px;
  border: 1px solid #bbb;
}
.popup-close svg { display: block; width: 12px; height: 11px; fill: none; stroke: #000; stroke-width: 1.8; }
.popup-tip { position: absolute; left: 69px; top: 32px; width: 12px; height: 9px; fill: #fff; stroke: #7681b3; }

/* management log */
.log-card { display: flex; flex-direction: column; height: 455px; padding: 0 12px; }
.log-head { display: flex; justify-content: space-between; height: 47px; padding-top: 11px; }
.status-legend {
  display: flex;
  gap: 8px;
  width: 264px;
  height: 24px;
  margin-top: 5px;
  padding-left: 8px;
  background: #9fa8da;
  color: #fff;
  font: 700 17px/21px "Noto Sans CJK KR", sans-serif;
  letter-spacing: .36px;
}
.status-legend span { display: flex; align-items: center; gap: 4px; white-space: nowrap; }
.dot { display: inline-block; width: 16px; height: 16px; border-radius: 50%; flex: none; }
.ok { background: #7cb04a; }
.dirty { background: #ffcc4d; }
.broken { background: #ff5530; }
.lost { background: #9a2eb0; }
.row {
  display: grid;
  grid-template-columns: 75px 75px 76px 388px 152px;
  height: 36px;
  align-items: center;
  font-size: 16px;
  letter-spacing: .9px;
  font-weight: 400;
  white-space: nowrap;
}
.row > span { padding: 0 0 2px 8.5px; }
.dots { font-weight: 400; letter-spacing: -.1px; }
.row > .center { display: flex; justify-content: center; padding: 0; }
.row .detail { padding: 0 0 5px 8px; }
.row .latin { letter-spacing: -.4px; padding: 0 0 0 9px; }
.row .date { letter-spacing: -.2px; padding: 0 0 0 1px; }
.row.alt { background: #f2f3f5; }
.row.head { height: 40px; background: #9fa8da; color: #fff; font-weight: 700; }
.row.head > span { padding-bottom: 2px; }
.row.head .detail { padding-left: 12px; }
.row.head .state { padding-left: 6px; }
.pager {
  display: flex;
  align-items: center;
  justify-content: center;
  gap: 13px;
  margin: auto 0 12px;
  padding-right: 40px;
}
.pager svg { width: 20px; height: 20px; margin: 0 -1px; fill: #8f8f8f; }
.page {
  width: 32px;
  height: 32px;
  border-radius: 50%;
  background: #ebebeb;
  color: #1f3b73;
  font-size: 15px;
  line-height: 31px;
  text-align: center;
}

/* charts */
.charts { width: 791px; padding: 24px 24px 0; }
.chart { height: 302px; }
.chart:nth-child(2) { height: 303px; }
.chart .title { height: 32px; line-height: 29px; }
.plot { display: block; width: 743px; height: 270px; }
.menu-ic { stroke: #6e8192; stroke-width: 2; }
.band { fill: #fafafa; }
.grid { stroke: #e8e8e8; stroke-width: 1.3; }
.axis { stroke: #e0e0e0; stroke-width: 1.6; }
.tick { stroke: #e0e0e0; }
.series { fill: none; stroke-width: 5; opacity: .9; }
.y { font: 11px "Noto Sans", sans-serif; text-anchor: end; }
.x { font: 12px "Liberation Sans", "Noto Sans CJK KR", sans-serif; text-anchor: middle; }
.key { font: 12px "Liberation Sans", "Noto Sans CJK KR", sans-serif; }
```
